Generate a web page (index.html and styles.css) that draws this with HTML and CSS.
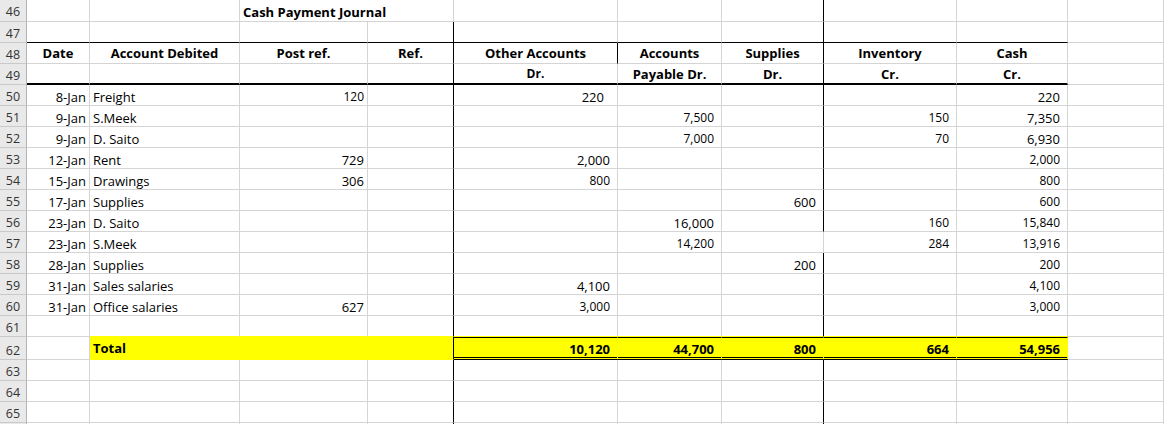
FILE: index.html
```html
<!DOCTYPE html>
<html>
<head>
<meta charset="utf-8">
<title>Cash Payment Journal</title>
<link rel="stylesheet" href="styles.css">
</head>
<body>
<div class="sheet">
  <div class="row r46">
    <div class="c h">46</div><div class="c"></div><div class="c"></div>
    <div class="c b span2">Cash Payment Journal</div>
    <div class="c"></div><div class="c"></div><div class="c kr"></div><div class="c"></div><div class="c"></div><div class="c"></div>
  </div>
  <div class="row">
    <div class="c h">47</div><div class="c kb"></div><div class="c kb"></div><div class="c kb"></div><div class="c kb kr"></div>
    <div class="c kb"></div><div class="c kb"></div><div class="c kb kr"></div><div class="c kb"></div><div class="c kb"></div><div class="c"></div>
  </div>
  <div class="row hdr">
    <div class="c h">48</div>
    <div class="c b ctr">Date</div>
    <div class="c b ctr">Account Debited</div>
    <div class="c b ctr">Post ref.</div>
    <div class="c b ctr kr">Ref.</div>
    <div class="c b ctr kr">Other Accounts</div>
    <div class="c b ctr">Accounts</div>
    <div class="c b ctr kr">Supplies</div>
    <div class="c b ctr">Inventory</div>
    <div class="c b ctr">Cash</div>
    <div class="c"></div>
  </div>
  <div class="row hdr">
    <div class="c h">49</div>
    <div class="c thick"></div><div class="c thick"></div><div class="c thick"></div><div class="c thick kr"></div>
    <div class="c thick b ctr s">Dr.</div>
    <div class="c thick b ctr">Payable Dr.</div>
    <div class="c thick b ctr kr">Dr.</div>
    <div class="c thick b ctr">Cr.</div>
    <div class="c thick b ctr">Cr.</div>
    <div class="c"></div>
  </div>
  <div class="row">
    <div class="c h">50</div>
    <div class="c rt">8-Jan</div><div class="c">Freight</div><div class="c rt s">120</div><div class="c kr"></div>
    <div class="c acc wide">220</div><div class="c acc"></div><div class="c acc kr"></div><div class="c acc"></div><div class="c acc">220</div><div class="c"></div>
  </div>
  <div class="row">
    <div class="c h">51</div>
    <div class="c rt">9-Jan</div><div class="c">S.Meek</div><div class="c rt"></div><div class="c kr"></div>
    <div class="c acc"></div><div class="c acc s">7,500</div><div class="c acc kr"></div><div class="c acc s">150</div><div class="c acc">7,350</div><div class="c"></div>
  </div>
  <div class="row">
    <div class="c h">52</div>
    <div class="c rt">9-Jan</div><div class="c">D. Saito</div><div class="c rt"></div><div class="c kr"></div>
    <div class="c acc"></div><div class="c acc s">7,000</div><div class="c acc kr"></div><div class="c acc s">70</div><div class="c acc">6,930</div><div class="c"></div>
  </div>
  <div class="row">
    <div class="c h">53</div>
    <div class="c rt">12-Jan</div><div class="c">Rent</div><div class="c rt">729</div><div class="c kr"></div>
    <div class="c acc">2,000</div><div class="c acc"></div><div class="c acc kr"></div><div class="c acc"></div><div class="c acc s">2,000</div><div class="c"></div>
  </div>
  <div class="row">
    <div class="c h">54</div>
    <div class="c rt">15-Jan</div><div class="c">Drawings</div><div class="c rt">306</div><div class="c kr"></div>
    <div class="c acc s">800</div><div class="c acc"></div><div class="c acc kr"></div><div class="c acc"></div><div class="c acc s">800</div><div class="c"></div>
  </div>
  <div class="row">
    <div class="c h">55</div>
    <div class="c rt">17-Jan</div><div class="c">Supplies</div><div class="c rt"></div><div class="c kr"></div>
    <div class="c acc"></div><div class="c acc"></div><div class="c acc kr">600</div><div class="c acc"></div><div class="c acc s">600</div><div class="c"></div>
  </div>
  <div class="row">
    <div class="c h">56</div>
    <div class="c rt">23-Jan</div><div class="c">D. Saito</div><div class="c rt"></div><div class="c kr"></div>
    <div class="c acc"></div><div class="c acc">16,000</div><div class="c acc kr"></div><div class="c acc s">160</div><div class="c acc s">15,840</div><div class="c"></div>
  </div>
  <div class="row">
    <div class="c h">57</div>
    <div class="c rt">23-Jan</div><div class="c">S.Meek</div><div class="c rt"></div><div class="c kr"></div>
    <div class="c acc"></div><div class="c acc s">14,200</div><div class="c acc"></div><div class="c acc s">284</div><div class="c acc s">13,916</div><div class="c"></div>
  </div>
  <div class="row">
    <div class="c h">58</div>
    <div class="c rt">28-Jan</div><div class="c">Supplies</div><div class="c rt"></div><div class="c kr"></div>
    <div class="c acc"></div><div class="c acc"></div><div class="c acc kr">200</div><div class="c acc"></div><div class="c acc s">200</div><div class="c"></div>
  </div>
  <div class="row">
    <div class="c h">59</div>
    <div class="c rt">31-Jan</div><div class="c">Sales salaries</div><div class="c rt"></div><div class="c kr"></div>
    <div class="c acc">4,100</div><div class="c acc"></div><div class="c acc kr"></div><div class="c acc"></div><div class="c acc s">4,100</div><div class="c"></div>
  </div>
  <div class="row">
    <div class="c h">60</div>
    <div class="c rt">31-Jan</div><div class="c">Office salaries</div><div class="c rt">627</div><div class="c kr"></div>
    <div class="c acc s">3,000</div><div class="c acc"></div><div class="c acc kr"></div><div class="c acc"></div><div class="c acc s">3,000</div><div class="c"></div>
  </div>
  <div class="row">
    <div class="c h">61</div>
    <div class="c"></div><div class="c yb"></div><div class="c yb"></div><div class="c yb kr"></div>
    <div class="c yb"></div><div class="c yb"></div><div class="c yb kr"></div><div class="c yb"></div><div class="c yb"></div><div class="c"></div>
  </div>
  <div class="row r62">
    <div class="c h">62</div>
    <div class="c"></div>
    <div class="c hl b">Total</div><div class="c hl"></div><div class="c hl kr"></div>
    <div class="c hl tot b acc">10,120</div>
    <div class="c hl tot b acc">44,700</div>
    <div class="c hl tot b acc">800</div>
    <div class="c hl tot b acc">664</div>
    <div class="c hl tot b acc">54,956</div>
    <div class="c"></div>
  </div>
  <div class="row">
    <div class="c h">63</div>
    <div class="c"></div><div class="c"></div><div class="c"></div><div class="c kr"></div>
    <div class="c"></div><div class="c"></div><div class="c kr"></div><div class="c"></div><div class="c"></div><div class="c"></div>
  </div>
  <div class="row">
    <div class="c h">64</div>
    <div class="c"></div><div class="c"></div><div class="c"></div><div class="c kr"></div>
    <div class="c"></div><div class="c"></div><div class="c kr"></div><div class="c"></div><div class="c"></div><div class="c"></div>
  </div>
  <div class="row">
    <div class="c h">65</div>
    <div class="c"></div><div class="c"></div><div class="c"></div><div class="c kr"></div>
    <div class="c"></div><div class="c"></div><div class="c kr"></div><div class="c"></div><div class="c"></div><div class="c"></div>
  </div>
  <div class="row">
    <div class="c h"></div>
    <div class="c"></div><div class="c"></div><div class="c"></div><div class="c kr"></div>
    <div class="c"></div><div class="c"></div><div class="c kr"></div><div class="c"></div><div class="c"></div><div class="c"></div>
  </div>
</div>
</body>
</html>
```

FILE: styles.css
```css
:root {
  --grid: #d4d4d4;
  --yellow: #ffff00;
}

html, body {
  margin: 0;
  padding: 0;
  background: #ffffff;
  overflow: hidden;
}

.sheet {
  font-family: "Open Sans", "Liberation Sans", sans-serif;
  color: #000000;
  width: 1164px;
}

.row {
  display: grid;
  grid-template-columns: 27px 63px 150px 128px 86px 164px 104px 102px 133px 111px 1fr;
  height: 21px;
}

.row.r46 { height: 22px; }
.row.r62 { height: 23px; }

.c {
  box-sizing: border-box;
  border-right: 1px solid var(--grid);
  border-bottom: 1px solid var(--grid);
  display: flex;
  align-items: flex-end;
  padding: 0 3px 1px 3px;
  font-size: 13px;
  line-height: 14px;
  white-space: nowrap;
  min-width: 0;
  overflow: visible;
}

.row.r46 .c { padding-bottom: 2px; }

.row.hdr .c { align-items: center; padding-bottom: 0; }

.span2 { grid-column: span 2; }

.h {
  background: #e9e9e9;
  color: #333333;
  justify-content: center;
  padding-left: 0;
  padding-right: 0;
  font-size: 12.5px;
  border-right-color: #b4b4b4;
  border-bottom-color: #c9c9c9;
}

.row.hdr .c.h { align-items: flex-end; padding-bottom: 1px; }

.b { font-weight: 700; }
.s { font-size: 12px; }
.ctr { justify-content: center; }
.rt { justify-content: flex-end; }
.acc { justify-content: flex-end; padding-right: 7px; }
.acc.wide { padding-right: 13px; }

.kr { border-right-color: #000000; }
.kb { border-bottom-color: #000000; }
.thick { border-bottom: 2px solid #000000; }
.yb { border-bottom-color: var(--yellow); }

.hl {
  background: var(--yellow);
  border-bottom-color: var(--yellow);
  border-right-color: var(--yellow);
  padding-bottom: 4px;
}
.hl.kr { border-right-color: #000000; }

.tot {
  border-top: 1px solid #000000;
  border-bottom: 3px double #000000;
  padding-bottom: 1px;
}
```
